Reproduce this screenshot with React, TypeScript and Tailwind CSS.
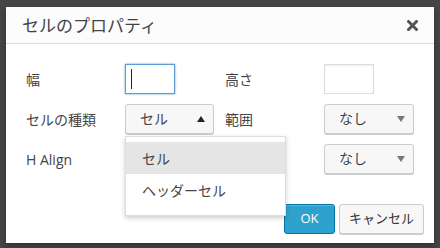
import React from "react";

const font = { fontFamily: '"Open Sans", "Noto Sans CJK JP", sans-serif' };

function Caret({ up }: { up?: boolean }) {
  return up ? (
    <svg width="8" height="6" viewBox="0 0 8 6" className="text-[#222]">
      <path d="M0 6 L4 0 L8 6 Z" fill="currentColor" />
    </svg>
  ) : (
    <svg width="8" height="6" viewBox="0 0 8 6" className="text-[#777]">
      <path d="M0 0 L8 0 L4 6 Z" fill="currentColor" />
    </svg>
  );
}

function Select({ value, open, width }: { value: string; open?: boolean; width: string }) {
  return (
    <div
      className={`${width} h-[30px] flex items-center justify-between pl-[14px] pr-[8px] bg-[#f7f7f7] border border-[#cccccc] rounded-[3px] shadow-[0_1px_0_#ccc] text-[14px] text-[#444] leading-none`}
    >
      <span>{value}</span>
      <Caret up={open} />
    </div>
  );
}

export default function App() {
  return (
    <div className="w-[440px] h-[248px] bg-[#454545] pt-[7px] pl-[6px] overflow-hidden" style={font}>
      <div className="w-[428px] h-[236px] bg-white flex flex-col shadow-[0_3px_6px_rgba(0,0,0,0.3)]">
        {/* header */}
        <div className="h-[37px] shrink-0 bg-[#fcfcfc] border-b border-[#dddddd] flex items-center justify-between pl-[16px] pr-[16px]">
          <span className="text-[17px] text-[#444] leading-none mt-[1px]">セルのプロパティ</span>
          <svg width="11" height="11" viewBox="0 0 11 11" className="text-[#555] mt-[1px]">
            <path d="M1.5 1.5 L9.5 9.5 M9.5 1.5 L1.5 9.5" stroke="currentColor" strokeWidth="3" strokeLinecap="square" />
          </svg>
        </div>

        {/* body */}
        <div className="flex-1 pt-[20px] pl-[20px] flex flex-col gap-[10px] relative">
          <div className="flex items-center h-[30px]">
            <div className="w-[99px] text-[14px] text-[#444]">幅</div>
            <div className="w-[100px]">
              <div className="w-[50px] h-[30px] border border-[#5b9dd9] shadow-[0_0_2px_rgba(30,140,190,0.8)] flex items-center pl-[5px]">
                <div className="w-px h-[20px] bg-[#222]" />
              </div>
            </div>
            <div className="w-[99px] text-[14px] text-[#444]">高さ</div>
            <div className="w-[50px] h-[30px] border border-[#dddddd] shadow-[inset_0_1px_2px_rgba(0,0,0,0.07)]" />
          </div>

          <div className="flex items-center h-[30px]">
            <div className="w-[99px] text-[14px] text-[#444]">セルの種類</div>
            <div className="w-[100px] relative">
              <Select value="セル" open width="w-[89px]" />
              <div className="absolute left-0 top-[32px] w-[161px] bg-white border border-[#dddddd] shadow-[0_2px_5px_rgba(0,0,0,0.2)] pt-[5px] pb-[9px] z-10">
                <div className="h-[32px] bg-[#e5e5e5] flex items-center pl-[16px] text-[14px] text-[#444]">セル</div>
                <div className="h-[32px] flex items-center pl-[16px] text-[14px] text-[#444]">ヘッダーセル</div>
              </div>
            </div>
            <div className="w-[99px] text-[14px] text-[#444]">範囲</div>
            <Select value="なし" width="w-[90px]" />
          </div>

          <div className="flex items-center h-[30px]">
            <div className="w-[99px] text-[14px] text-[#444]">H Align</div>
            <div className="w-[100px]" />
            <div className="w-[99px]" />
            <Select value="なし" width="w-[90px]" />
          </div>
        </div>

        {/* footer */}
        <div className="flex justify-end gap-[4px] pr-[10px] pb-[9px]">
          <button className="w-[51px] h-[30px] bg-[#2ea2cc] border border-[#0074a2] rounded-[3px] text-white text-[13px] shadow-[inset_0_1px_0_rgba(120,200,230,0.5)]">
            OK
          </button>
          <button className="w-[85px] h-[30px] bg-[#f7f7f7] border border-[#cccccc] rounded-[3px] text-[#333] text-[13px] shadow-[0_1px_0_#ccc]">
            キャンセル
          </button>
        </div>
      </div>
    </div>
  );
}
